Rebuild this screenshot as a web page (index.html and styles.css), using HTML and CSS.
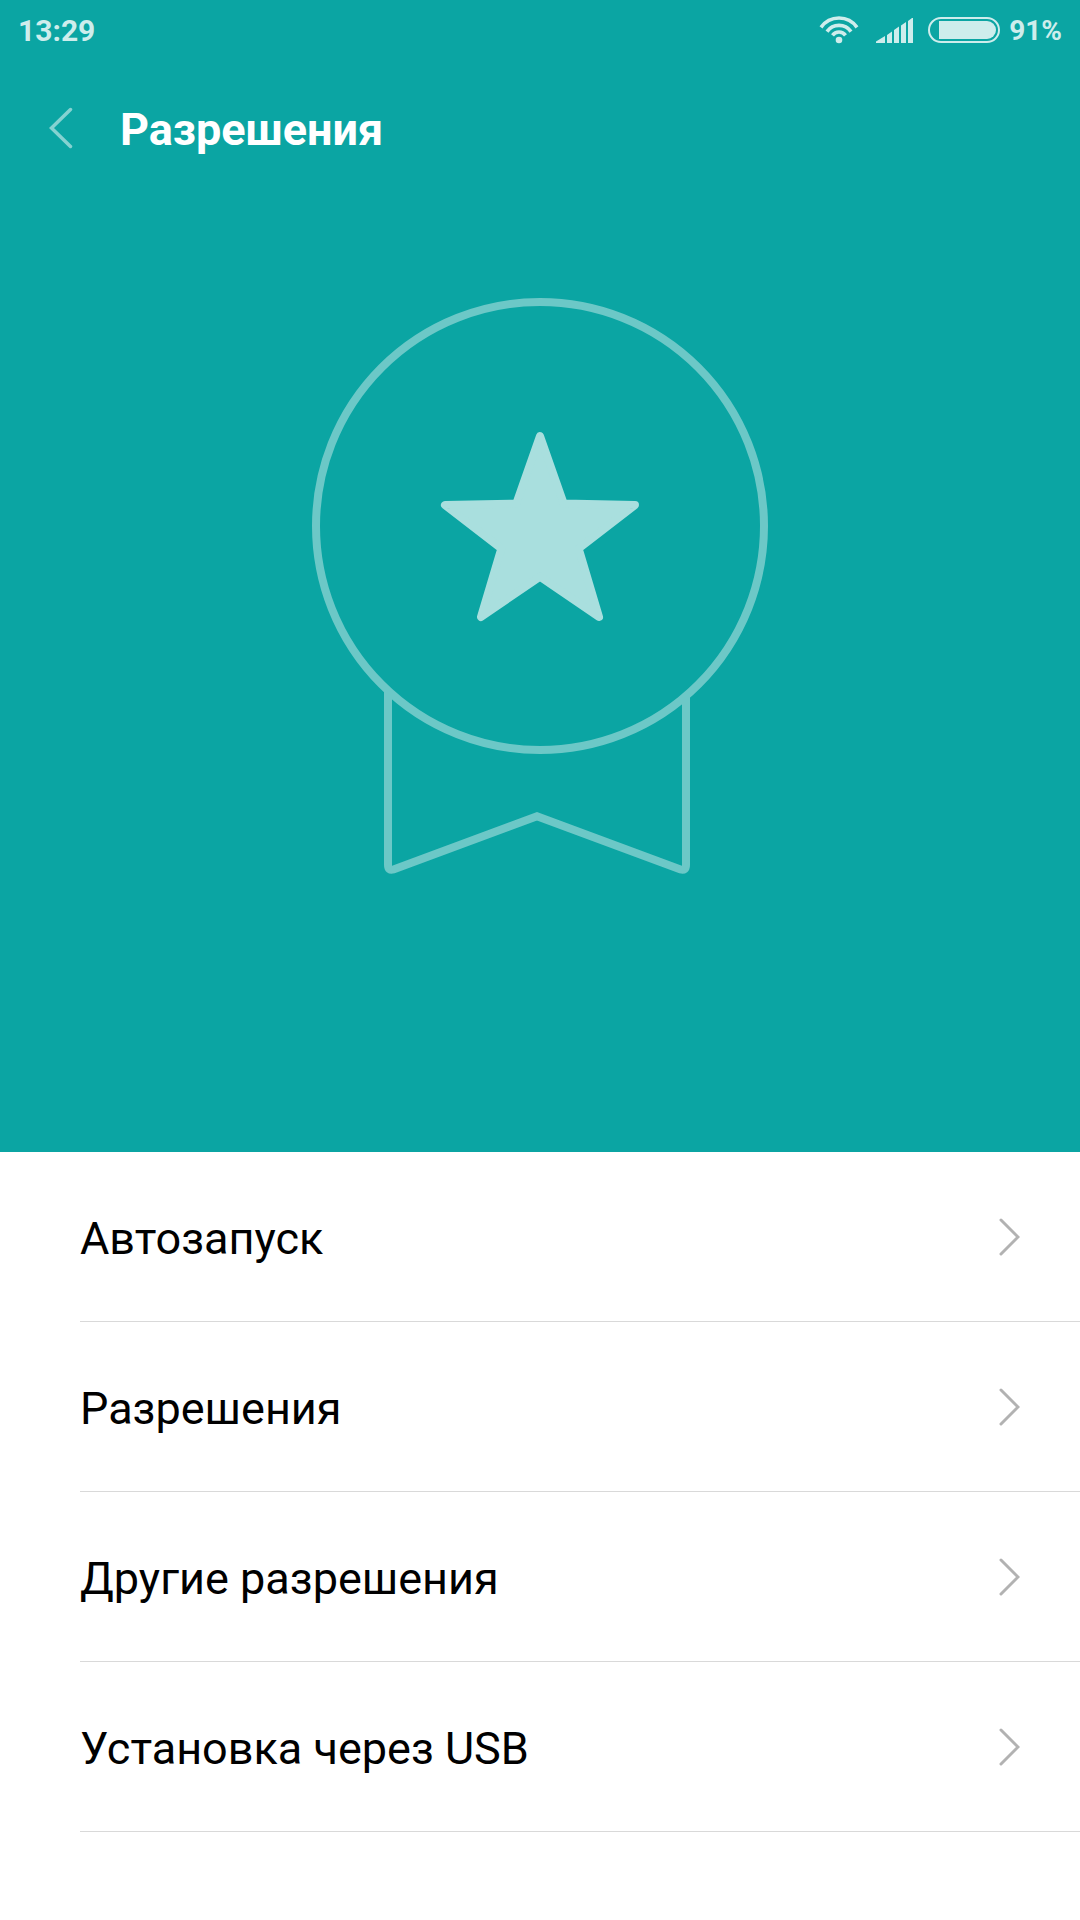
FILE: index.html
```html
<!DOCTYPE html>
<html lang="ru">
<head>
  <meta charset="utf-8">
  <meta name="viewport" content="width=device-width, initial-scale=1">
  <title>Разрешения</title>
  <link rel="stylesheet" href="styles.css">
</head>
<body>
  <div class="hero">
    <div class="status">
      <time class="clock">13:29</time>
      <svg class="wifi" width="40" height="30" viewBox="0 0 40 30" aria-hidden="true">
        <circle cx="20" cy="25" r="3.3" fill="currentColor"/>
        <path d="M2 12.4a22 22 0 0 1 36 0M8 16.6a14.7 14.7 0 0 1 24 0M13.5 20.4a8 8 0 0 1 13 0" fill="none" stroke="currentColor" stroke-width="3.6"/>
      </svg>
      <svg class="signal" width="38" height="26" viewBox="0 0 38 26" aria-hidden="true">
        <path d="M0 26v-1.500L9 19v7zM11 26V18L16 14.500v11.500zM18 26V13L23 9.500v16.500zM25 26V8.500L30 5v21zM32 26V4L36 1h1v25z" fill="currentColor"/>
      </svg>
      <svg class="battery" width="72" height="26" viewBox="0 0 72 26" aria-hidden="true">
        <rect x="1" y="1" width="70" height="24" rx="12" fill="none" stroke="currentColor" stroke-width="2"/>
        <path d="M11 4h48a9 9 0 0 1 0 18H11z" fill="currentColor"/>
      </svg>
      <span class="percent">91%</span>
    </div>
    <header class="header">
      <button class="back" type="button" aria-label="Назад">
        <svg width="24" height="42" viewBox="0 0 24 42" aria-hidden="true">
          <path d="M21.500 2.500L2.500 21l19 18.500" fill="none" stroke="currentColor" stroke-width="3.500" stroke-linecap="round"/>
        </svg>
      </button>
      <h1 class="title">Разрешения</h1>
    </header>
    <svg class="medal" width="456" height="576" viewBox="312 298 456 576" aria-hidden="true">
      <g fill="none" stroke="#6cc8c7" stroke-width="8">
        <circle cx="540" cy="526" r="224"/>
        <path d="M388 690V865Q388 871 393.500 869.500L537 816.300L680.500 869.500Q686 871 686 865V694"/>
      </g>
      <path d="M540 436L563.700 503.500L635 505L578.600 548.500L599 617L540 576.600L481 617L501.400 548.500L445 505L516.300 503.500Z" fill="#a9dfde" stroke="#a9dfde" stroke-width="8" stroke-linejoin="round"/>
    </svg>
  </div>
  <nav class="list">
    <a class="row" href="#autostart"><span class="label">Автозапуск</span>
      <svg class="arrow" width="22" height="38" viewBox="0 0 22 38" aria-hidden="true"><path d="M3 2l17 17L3 36" /></svg></a>
    <a class="row" href="#permissions"><span class="label">Разрешения</span>
      <svg class="arrow" width="22" height="38" viewBox="0 0 22 38" aria-hidden="true"><path d="M3 2l17 17L3 36" /></svg></a>
    <a class="row" href="#other"><span class="label">Другие разрешения</span>
      <svg class="arrow" width="22" height="38" viewBox="0 0 22 38" aria-hidden="true"><path d="M3 2l17 17L3 36" /></svg></a>
    <a class="row" href="#usb"><span class="label">Установка через USB</span>
      <svg class="arrow" width="22" height="38" viewBox="0 0 22 38" aria-hidden="true"><path d="M3 2l17 17L3 36" /></svg></a>
  </nav>
</body>
</html>
```

FILE: styles.css
```css
* {
  box-sizing: border-box;
}

body {
  margin: 0;
  background: #fff;
  color: #000;
  font-family: Roboto, "Noto Sans", sans-serif;
}

.hero {
  display: flex;
  flex-direction: column;
  padding-bottom: 278px;
  background: #0ba5a3;
}

.status {
  display: flex;
  align-items: center;
  height: 60px;
  padding: 0 18px;
  color: #ceedec;
  font-size: 30px;
  font-weight: 700;
}

.clock {
  margin-right: auto;
}

.signal {
  margin-left: 17px;
}

.battery {
  margin: 0 9px 0 14px;
}

.percent {
  font-size: 28px;
}

.header {
  display: flex;
  align-items: center;
  height: 136px;
  padding: 0 49px;
}

.back {
  display: flex;
  width: 71px;
  padding: 0;
  border: 0;
  background: none;
  color: #85d2d1;
}

.title {
  margin: 0;
  padding-top: 2px;
  color: #fff;
  font-size: 45px;
  font-weight: 700;
}

.medal {
  align-self: center;
  margin-top: 102px;
}

.list {
  padding-left: 80px;
}

.row {
  display: flex;
  align-items: center;
  justify-content: space-between;
  height: 170px;
  padding-right: 60px;
  border-bottom: 1px solid #d9d9d9;
  color: #000;
  font-size: 45px;
  line-height: 60px;
  text-decoration: none;
}

.label {
  padding-top: 4px;
}

.arrow {
  fill: none;
  stroke: #b2b2b2;
  stroke-width: 3;
  stroke-linecap: round;
}
```
